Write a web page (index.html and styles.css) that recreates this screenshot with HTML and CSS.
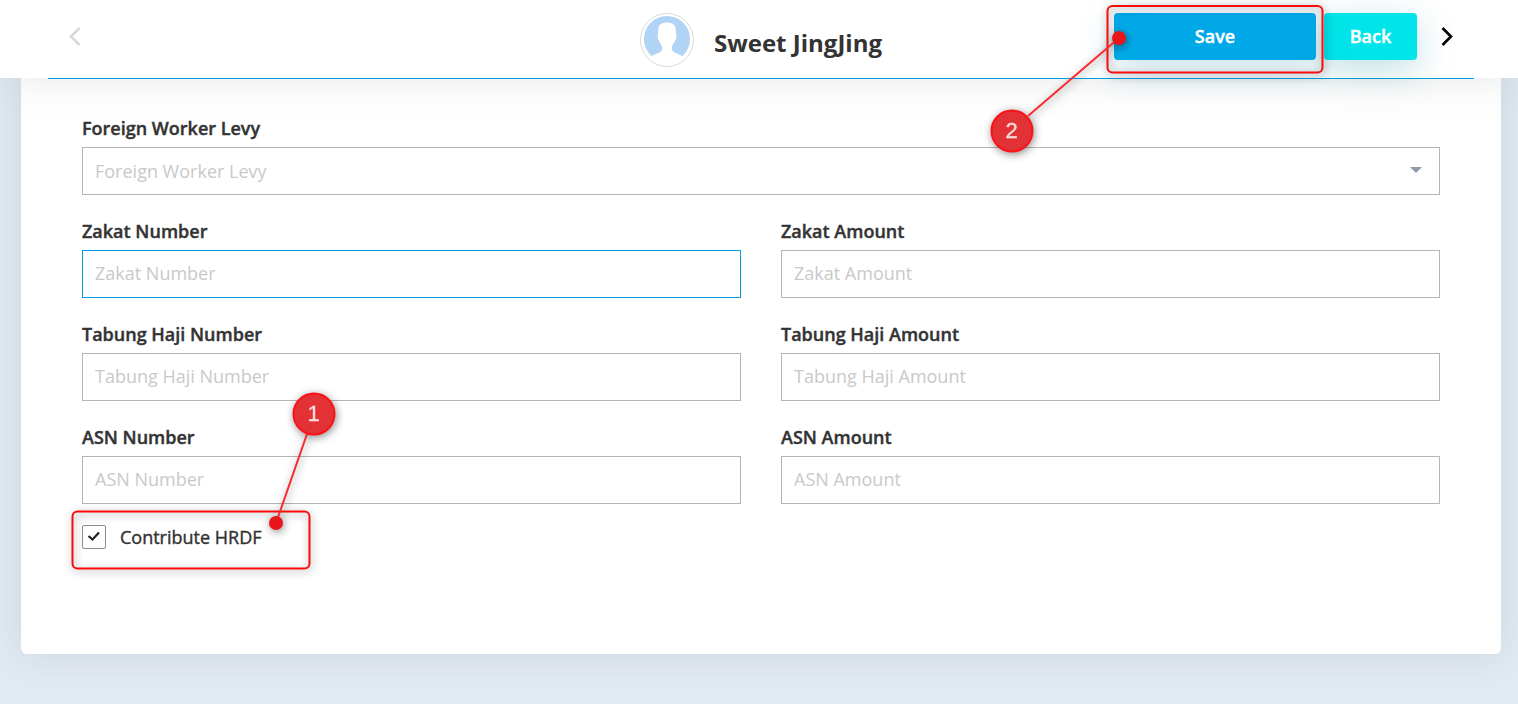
FILE: index.html
```
<!DOCTYPE html>
<html lang="en">

<head>
    <meta charset="utf-8">
    <title>Sweet JingJing</title>
    <meta name="viewport" content="width=device-width, initial-scale=1">
    <link rel="stylesheet" href="styles.css">
</head>

<body>
    <header class="topbar">
        <div class="topbar-inner">
            <button class="nav-arrow prev" type="button" aria-label="Previous" disabled>
                <svg width="12" height="20" viewBox="0 0 12 20"><path d="M10.5 1 2 9.500l8.500 8.500"/></svg>
            </button>
            <div class="profile">
                <svg class="avatar" width="54" height="54" viewBox="0 0 54 54">
                    <circle cx="27" cy="27" r="26.5" fill="#fff" stroke="#d9d9d9"/>
                    <path d="M11.700 43.200A23 23 0 1 1 42.300 43.200C38.500 40.500 33 40 32 36.500c-.300-1.500.100-3 .500-4.500 1.300-1.500 2.200-3 2.800-5 1.200-.500 1.500-4 .700-5l-.300-6.500c-.500-4-4-6-8.700-6s-8.200 2-8.700 6L18 22c-.800 1-.500 4.500.700 5 .600 2 1.500 3.500 2.800 5 .400 1.500.800 3 .500 4.500-1 3.500-6.500 4-10.300 6.700z" fill="#b1d3f4"/>
                </svg>
                <h1 class="name">Sweet JingJing</h1>
            </div>
            <div class="actions">
                <div class="save-wrap">
                    <button class="btn btn-save" type="submit" form="statutory">Save</button>
                    <svg class="callout callout-save" width="370" height="170" viewBox="970 0 370 170">
                        <rect class="callout-box" x="1107.500" y="6" width="215" height="66.500" rx="5"/>
                        <path class="callout-line" d="M1119 38 1028 116"/>
                        <circle class="callout-dot" cx="1119" cy="38" r="7"/>
                        <circle class="callout-badge" cx="1012" cy="131" r="20.500"/>
                        <text class="callout-num" x="1011.500" y="138">2</text>
                    </svg>
                </div>
                <button class="btn btn-back" type="button">Back</button>
                <button class="nav-arrow next" type="button" aria-label="Next">
                    <svg width="12" height="20" viewBox="0 0 12 20"><path d="M1.500 1 10 9.500 1.500 18"/></svg>
                </button>
            </div>
        </div>
    </header>

    <main class="card">
        <form id="statutory" class="form-grid">
            <div class="field wide">
                <label for="levy">Foreign Worker Levy</label>
                <div class="select-wrap">
                    <select id="levy">
                        <option>Foreign Worker Levy</option>
                    </select>
                </div>
            </div>
            <div class="field">
                <label for="zakat-no">Zakat Number</label>
                <input class="active" id="zakat-no" type="text" placeholder="Zakat Number">
            </div>
            <div class="field">
                <label for="zakat-amt">Zakat Amount</label>
                <input id="zakat-amt" type="text" placeholder="Zakat Amount">
            </div>
            <div class="field">
                <label for="haji-no">Tabung Haji Number</label>
                <input id="haji-no" type="text" placeholder="Tabung Haji Number">
            </div>
            <div class="field">
                <label for="haji-amt">Tabung Haji Amount</label>
                <input id="haji-amt" type="text" placeholder="Tabung Haji Amount">
            </div>
            <div class="field">
                <label for="asn-no">ASN Number</label>
                <input id="asn-no" type="text" placeholder="ASN Number">
            </div>
            <div class="field">
                <label for="asn-amt">ASN Amount</label>
                <input id="asn-amt" type="text" placeholder="ASN Amount">
            </div>
        </form>
        <div class="check-row">
            <span class="check">
                <input id="hrdf" type="checkbox" form="statutory" checked>
                <svg class="tick" width="24" height="24" viewBox="0 0 24 24"><path d="m6.500 11 4 3.500 6.500-7"/></svg>
            </span>
            <label for="hrdf">Contribute HRDF</label>
            <svg class="callout callout-check" width="300" height="210" viewBox="60 380 300 210">
                <rect class="callout-box" x="72.500" y="511.500" width="237" height="57" rx="5"/>
                <path class="callout-line" d="M276 523 307 434"/>
                <circle class="callout-dot" cx="276" cy="523" r="7"/>
                <circle class="callout-badge" cx="314" cy="414" r="20.500"/>
                <text class="callout-num" x="313.500" y="421">1</text>
            </svg>
        </div>
    </main>
</body>

</html>
```

FILE: styles.css
```
* {
    box-sizing: border-box;
}

body {
    margin: 0;
    background: #e2eaf2;
    color: #333;
    font-family: "Open Sans", sans-serif;
    font-size: 18px;
    line-height: 24px;
}

button,
input,
select {
    font: inherit;
}

/* Header */
.topbar {
    position: relative;
    z-index: 2;
    padding: 0 44px 0 48px;
    background: #fff;
    box-shadow: 0 0 40px rgba(82, 95, 100, .15);
}

.topbar-inner {
    display: grid;
    grid-template-columns: 1fr auto 1fr;
    height: 78px;
    padding: 13px 21px 0;
    box-shadow: 0 1px 0 #00a0dc;
}

.nav-arrow {
    height: 47px;
    padding: 0;
    border: 0;
    background: none;
    color: #000;
    cursor: pointer;
}

.nav-arrow svg {
    display: block;
    fill: none;
    stroke: currentColor;
    stroke-width: 2.6;
}

.prev {
    justify-self: start;
    color: #d9d9d9;
}

.profile {
    display: flex;
    align-items: flex-start;
    gap: 20px;
}

.name {
    margin: 0;
    padding-top: 13px;
    font-size: 24px;
    line-height: 34px;
    font-weight: 700;
}

.actions {
    display: flex;
    justify-content: flex-end;
    align-items: flex-start;
    gap: 8px;
}

.save-wrap {
    position: relative;
}

.btn {
    height: 47px;
    padding: 0 0 2px;
    border: 0;
    border-radius: 4px;
    color: #fff;
    font-weight: 600;
    -webkit-text-stroke: .4px;
    cursor: pointer;
}

.btn-save {
    width: 202px;
    background: #00a8e8;
    box-shadow: 0 10px 36px rgba(0, 120, 170, .22);
}

.btn-back {
    width: 93px;
    background: #00e5e9;
    box-shadow: 0 10px 36px rgba(0, 130, 140, .25);
}

.next {
    margin-left: 16px;
}

/* Form */
.card {
    margin: 0 17px 50px 21px;
    padding: 38px 61px 105px;
    background: #fff;
    border-radius: 0 0 6px 6px;
    box-shadow: 0 0 40px rgba(82, 95, 100, .15);
}

.form-grid {
    display: grid;
    grid-template-columns: 1fr 1fr;
    gap: 24px 40px;
}

.field {
    display: flex;
    flex-direction: column;
    gap: 7px;
}

.wide {
    grid-column: 1 / -1;
}

.field label {
    font-weight: 600;
    -webkit-text-stroke: .4px;
}

.field input,
.field select {
    width: 100%;
    height: 48px;
    padding: 0 12px;
    border: 1px solid #b5b5b5;
    border-radius: 0;
    background: #fff;
    color: #333;
    outline: 0;
}

.field input {
    padding-bottom: 2px;
}

.field input::placeholder {
    color: #c9c9c9;
    opacity: 1;
}

.field input:focus,
.field input.active {
    border-color: #00a0dc;
}

.field select {
    display: block;
    appearance: none;
    color: #c9c9c9;
}

.select-wrap {
    position: relative;
}

.select-wrap::after {
    content: "";
    position: absolute;
    top: 20px;
    right: 18px;
    border: 6px solid transparent;
    border-top-color: #929ba5;
    border-bottom: 0;
    pointer-events: none;
}

.check-row {
    position: relative;
    display: flex;
    align-items: center;
    gap: 14px;
    margin-top: 21px;
}

.check {
    position: relative;
    width: 24px;
    height: 24px;
}

.check input {
    display: block;
    appearance: none;
    width: 24px;
    height: 24px;
    margin: 0;
    border: 1px solid #8c8c8c;
    border-radius: 2px;
    background: #fff;
}

.tick {
    position: absolute;
    top: 0;
    left: 0;
    display: none;
    fill: none;
    stroke: #222;
    stroke-width: 2.2;
    pointer-events: none;
}

.check input:checked + .tick {
    display: block;
}

.check-row label {
    font-weight: 500;
    -webkit-text-stroke: .4px;
}

/* Numbered callouts, drawn over the controls */
.callout {
    position: absolute;
    pointer-events: none;
    filter: drop-shadow(1px 2px 4px rgba(0, 0, 0, .45));
}

.callout-save {
    top: -13px;
    left: -144px;
}

.callout-check {
    top: -145px;
    left: -22px;
}

.callout-box {
    fill: none;
    stroke: #f80c0c;
    stroke-width: 2;
}

.callout-line {
    stroke: #f92a2f;
    stroke-width: 2;
}

.callout-dot {
    fill: #e8151b;
}

.callout-badge {
    fill: #e23236;
    stroke: #fb1217;
    stroke-width: 2;
}

.callout-num {
    fill: #fbdcdc;
    stroke: #fbdcdc;
    stroke-width: .4;
    font-family: "Liberation Sans", Arial, sans-serif;
    font-size: 22px;
    text-anchor: middle;
}
```
